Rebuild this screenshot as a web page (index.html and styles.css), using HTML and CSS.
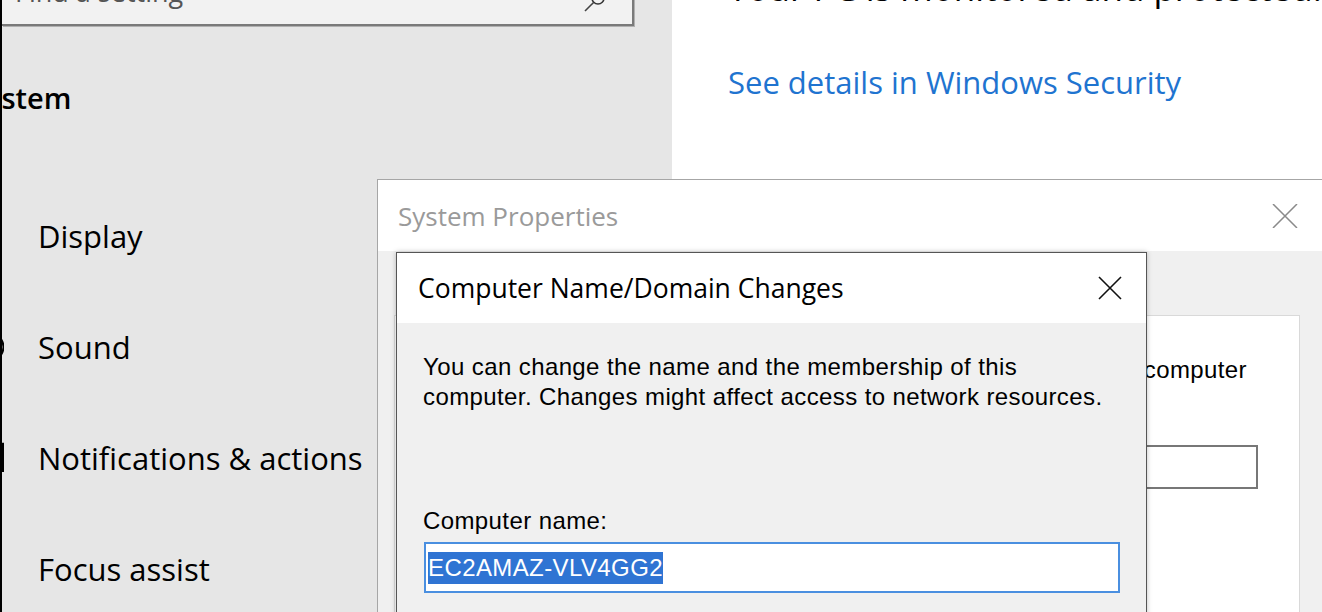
FILE: index.html
```html
<!DOCTYPE html>
<html lang="en">
<head>
<meta charset="utf-8">
<title>System Properties</title>
<link rel="stylesheet" href="styles.css">
</head>
<body>
<div class="desktop">
  <div class="settings">
    <div class="edge"></div>
    <aside class="sidebar">
      <div class="search">
        <span class="search-text">Find a setting</span>
        <svg class="search-icon" width="22" height="22" viewBox="0 0 22 22"><circle cx="15" cy="7" r="6" fill="none" stroke="#333" stroke-width="1.6"/><line x1="10.8" y1="11.2" x2="2" y2="20" stroke="#444" stroke-width="1.6"/></svg>
      </div>
      <h2 class="side-title">System</h2>
      <nav class="nav">
        <div class="nav-item"><span class="nav-icon"></span><span>Display</span></div>
        <div class="nav-item"><svg class="nav-icon" width="24" height="32" viewBox="0 0 24 32"><path d="M4 10 L10 10 L16 5 L16 27 L10 22 L4 22 Z" fill="none" stroke="#000" stroke-width="1.5"/><path d="M21 8 Q26 16 21 24" fill="none" stroke="#000" stroke-width="2"/></svg><span>Sound</span></div>
        <div class="nav-item"><svg class="nav-icon" width="24" height="32" viewBox="0 0 24 32"><path d="M2 2 L23 2 L23 30" fill="none" stroke="#000" stroke-width="2.4"/></svg><span>Notifications &amp; actions</span></div>
        <div class="nav-item"><span class="nav-icon"></span><span>Focus assist</span></div>
      </nav>
    </aside>
    <main class="content">
      <h1 class="hero">Your PC is monitored and protected.</h1>
      <a class="link">See details in Windows Security</a>
    </main>
  </div>

  <section class="win sysprops">
    <header class="sp-title">
      <span>System Properties</span>
      <svg width="26" height="24" viewBox="0 0 26 24"><path d="M1 0 L25 24 M25 0 L1 24" stroke="#8a8a8a" stroke-width="1.5"/></svg>
    </header>
    <div class="sp-body">
      <div class="panel">
        <p class="panel-line">Windows uses the following information to identify your computer</p>
        <div class="panel-box"></div>
      </div>
    </div>
  </section>

  <section class="win cnd">
    <header class="cnd-title">
      <span>Computer Name/Domain Changes</span>
      <svg width="24" height="24" viewBox="0 0 24 24"><path d="M1 1 L23 23 M23 1 L1 23" stroke="#111" stroke-width="1.6"/></svg>
    </header>
    <div class="cnd-body">
      <p class="cnd-desc">You can change the name and the membership of this<br>computer. Changes might affect access to network resources.</p>
      <p class="cnd-label">Computer name:</p>
      <div class="cnd-input"><span class="sel">EC2AMAZ-VLV4GG2</span></div>
    </div>
  </section>
</div>
</body>
</html>
```

FILE: styles.css
```css
html, body {
  margin: 0;
  padding: 0;
}
body {
  width: 1322px;
  height: 612px;
  overflow: hidden;
  font-family: "Open Sans", "Noto Sans", sans-serif;
  color: #000;
}
.desktop {
  position: relative;
  width: 1322px;
  height: 612px;
  overflow: hidden;
  background: #fff;
}
.settings {
  display: flex;
  height: 612px;
}
.edge {
  flex: none;
  width: 2px;
  background: #000;
  position: relative;
  z-index: 1;
}
.sidebar {
  flex: none;
  width: 670px;
  background: #e6e6e6;
  display: flex;
  flex-direction: column;
}
.sidebar > * {
  flex: none;
}
.search {
  box-sizing: border-box;
  height: 60px;
  margin: -34px 38px 0 0;
  background: #f2f2f2;
  border: 2px solid #7a7a7a;
  border-left: none;
  box-shadow: 1px 1px 0 #b0b0b0;
  display: flex;
  align-items: flex-end;
  justify-content: space-between;
  padding: 0 27px 17px 13px;
}
.search-text {
  font-size: 27px;
  line-height: 30px;
  color: #555;
}
.search-icon {
  display: block;
  margin-bottom: -5.5px;
}
.side-title {
  margin: 50px 0 0 -32px;
  font-size: 29px;
  font-weight: 600;
  line-height: 44px;
}
.nav {
  margin-top: 60px;
}
.nav-item {
  height: 111px;
  display: flex;
  align-items: center;
  font-size: 31px;
  white-space: nowrap;
}
.nav-icon {
  flex: none;
  display: block;
  width: 24px;
  height: 32px;
  margin-left: -22px;
  margin-right: 34px;
}
.content {
  flex: 1;
  padding-left: 56px;
  min-width: 0;
}
.hero {
  margin: -34px 0 0;
  font-size: 35px;
  font-weight: 400;
  line-height: 44px;
  white-space: nowrap;
}
.link {
  display: block;
  margin-top: 52px;
  font-size: 31px;
  line-height: 40px;
  color: #1f74d0;
}

.win {
  position: absolute;
  box-sizing: border-box;
}
.sysprops {
  left: 377px;
  top: 179px;
  width: 950px;
  height: 440px;
  border: 1px solid #a6a6a6;
  background: #f0f0f0;
  display: flex;
  flex-direction: column;
}
.sp-title {
  flex: none;
  height: 71px;
  background: #fff;
  display: flex;
  align-items: center;
  justify-content: space-between;
  padding: 0 28px 0 20px;
  font-size: 26px;
  color: #9a9a9a;
}
.sp-body {
  flex: 1;
  padding: 64px 26px 0 16px;
}
.panel {
  height: 400px;
  background: #fff;
  border: 1px solid #d9d9d9;
  padding-top: 39px;
  font-family: "Liberation Sans", Arial, sans-serif;
  font-size: 24px;
  letter-spacing: 0.4px;
  line-height: 30px;
}
.panel-line {
  margin: 0;
  text-align: right;
  padding-right: 52px;
  white-space: nowrap;
}
.panel-box {
  box-sizing: border-box;
  width: 300px;
  height: 44px;
  margin: 60px 41px 0 auto;
  border: 2px solid #777;
}

.cnd {
  left: 396px;
  top: 252px;
  width: 751px;
  height: 380px;
  border: 1px solid #555;
  background: #f0f0f0;
  box-shadow: 0 0 5px rgba(0, 0, 0, 0.25);
  display: flex;
  flex-direction: column;
}
.cnd-title {
  flex: none;
  height: 70px;
  background: #fff;
  display: flex;
  align-items: center;
  justify-content: space-between;
  padding: 0 24px 0 21px;
  font-size: 26.5px;
}
.cnd-body {
  padding: 29px 0 0 26px;
  font-family: "Liberation Sans", Arial, sans-serif;
  font-size: 24px;
  letter-spacing: 0.4px;
  line-height: 30px;
}
.cnd-desc,
.cnd-label {
  margin: 0;
}
.cnd-label {
  margin-top: 94px;
}
.cnd-input {
  box-sizing: border-box;
  width: 696px;
  height: 51px;
  margin: 6px 0 0 1px;
  border: 2px solid #4a8fe0;
  background: #fff;
  display: flex;
  align-items: center;
  padding-left: 2px;
}
.sel {
  background: #2f74d3;
  color: #fff;
  line-height: 32px;
}
```
